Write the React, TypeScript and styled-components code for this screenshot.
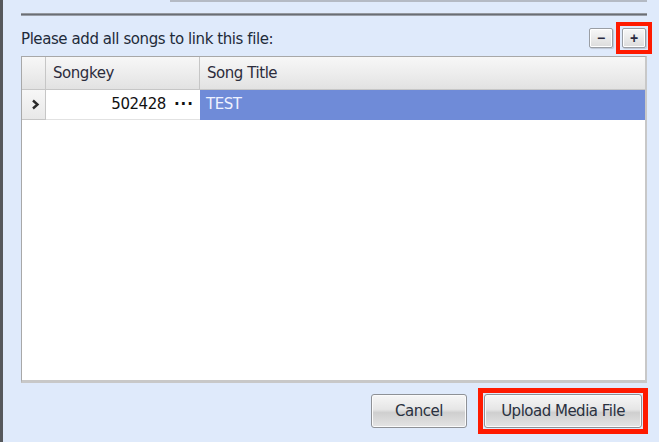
import React from "react";
import styled, { createGlobalStyle } from "styled-components";

const Global = createGlobalStyle`
  html, body { margin: 0; padding: 0; background: #dfeafb; }
  body { font-family: "DejaVu Sans", "Liberation Sans", sans-serif; }
`;

const Window = styled.div`
  width: 659px;
  height: 442px;
  box-sizing: border-box;
  background: #dfeafb;
  border-left: 3px solid #56585c;
  display: flex;
  flex-direction: column;
  overflow: hidden;
`;

const TopArea = styled.div`
  height: 16px;
  display: flex;
  flex-direction: column;
  padding: 0 12px 0 18px;
`;

const InputEdge = styled.div`
  margin-left: 149px;
  height: 2px;
  background: #b4bac4;
`;

const Separator = styled.div`
  margin-top: 11px;
  height: 3px;
  background: linear-gradient(#a9adb3, #5d6168 60%, #c4cad3);
`;

const Body = styled.div`
  flex: 1;
  display: flex;
  flex-direction: column;
  padding: 0 12px 0 18px;
`;

const LabelRow = styled.div`
  height: 40px;
  display: flex;
  align-items: center;
  justify-content: space-between;
`;

const Label = styled.span`
  font-size: 15px;
  letter-spacing: -0.42px;
  color: #1e2a3a;
  padding-top: 6px;
`;

const TinyButtons = styled.div`
  display: flex;
  align-items: center;
  gap: 3px;
  margin-right: -5px;
  margin-top: 4px;
`;

const Highlight = styled.div<{ $on?: boolean; $width: number; $gap: number }>`
  border: ${(p) => p.$width}px solid ${(p) => (p.$on ? "#ff1a00" : "transparent")};
  padding: ${(p) => p.$gap}px;
  display: flex;
`;

const TinyButton = styled.button`
  width: 24px;
  height: 20px;
  padding: 0;
  border: 1px solid #9a9ea4;
  border-radius: 2px;
  background: linear-gradient(#f8f8f8, #dcdcdc);
  box-shadow: inset 0 0 0 1px #ffffff, 1px 1px 1px rgba(0,0,0,0.15);
  font-size: 14px;
  font-weight: bold;
  color: #2a2a40;
  line-height: 16px;
`;

const Grid = styled.div`
  height: 327px;
  box-sizing: border-box;
  background: #ffffff;
  border: 1px solid #a8a8a8;
  border-bottom-width: 3px;
  border-bottom-color: #c8c8c8;
  border-right-width: 2px;
  border-right-color: #c8c8c8;
  display: flex;
  flex-direction: column;
`;

const GridRow = styled.div<{ $header?: boolean }>`
  display: grid;
  grid-template-columns: 24px 154px 1fr;
  height: ${(p) => (p.$header ? "33px" : "30px")};
`;

const HeaderCell = styled.div`
  background: linear-gradient(#f7f7f7, #ececec 55%, #e2e2e2);
  border-right: 1px solid #c6c6c6;
  border-bottom: 1px solid #c6c6c6;
  display: flex;
  align-items: center;
  padding-left: 7px;
  padding-bottom: 1px;
  font-size: 15px;
  letter-spacing: -0.45px;
  color: #2c2c3c;
  &:last-child { border-right: none; }
`;

const RowHeader = styled.div`
  background: linear-gradient(#f7f7f7, #e8e8e8);
  border-right: 1px solid #c6c6c6;
  border-bottom: 1px solid #c6c6c6;
  display: flex;
  align-items: center;
  padding-left: 9px;
`;

const Cell = styled.div<{ $selected?: boolean; $right?: boolean }>`
  background: ${(p) => (p.$selected ? "#6f8bd8" : "#ffffff")};
  color: ${(p) => (p.$selected ? "#eef2ff" : "#111111")};
  border-bottom: 1px solid ${(p) => (p.$selected ? "#6f8bd8" : "#e2e2e2")};
  display: flex;
  align-items: center;
  justify-content: ${(p) => (p.$right ? "flex-end" : "flex-start")};
  padding: 0 6px 1px 6px;
  font-size: 15px;
  letter-spacing: -0.45px;
`;

const Dots = styled.span`
  margin-left: 8px;
  font-weight: bold;
  letter-spacing: 1px;
`;

const Footer = styled.div`
  display: flex;
  justify-content: flex-end;
  align-items: center;
  gap: 5px;
  padding-top: 5px;
  margin-right: -1px;
`;

const DialogButton = styled.button<{ $width: number }>`
  width: ${(p) => p.$width}px;
  height: 34px;
  border: 1px solid #8e9196;
  border-radius: 3px;
  background: linear-gradient(#f6f6f6, #e6e6e6 45%, #cfcfcf 55%, #e4e4e4);
  box-shadow: inset 0 0 0 1px #fbfbfb;
  font-family: "DejaVu Sans", sans-serif;
  font-size: 15px;
  letter-spacing: -0.5px;
  color: #2a3140;
  padding: 0;
`;

export default function App() {
  return (
    <>
      <Global />
      <Window>
        <TopArea>
          <InputEdge />
          <Separator />
        </TopArea>
        <Body>
          <LabelRow>
            <Label>Please add all songs to link this file:</Label>
            <TinyButtons>
              <TinyButton>−</TinyButton>
              <Highlight $on $width={4} $gap={2}>
                <TinyButton>+</TinyButton>
              </Highlight>
            </TinyButtons>
          </LabelRow>
          <Grid>
            <GridRow $header>
              <HeaderCell />
              <HeaderCell>Songkey</HeaderCell>
              <HeaderCell>Song Title</HeaderCell>
            </GridRow>
            <GridRow>
              <RowHeader>
                <svg width="9" height="11" viewBox="0 0 9 11">
                  <path d="M2 1.5 L6.5 5.5 L2 9.5" fill="none" stroke="#2a2a2a" strokeWidth="2.4" />
                </svg>
              </RowHeader>
              <Cell $right>
                502428<Dots>···</Dots>
              </Cell>
              <Cell $selected>TEST</Cell>
            </GridRow>
          </Grid>
          <Footer>
            <Highlight $width={5} $gap={1}>
              <DialogButton $width={96}>Cancel</DialogButton>
            </Highlight>
            <Highlight $on $width={5} $gap={1}>
              <DialogButton $width={158}>Upload Media File</DialogButton>
            </Highlight>
          </Footer>
        </Body>
      </Window>
    </>
  );
}
